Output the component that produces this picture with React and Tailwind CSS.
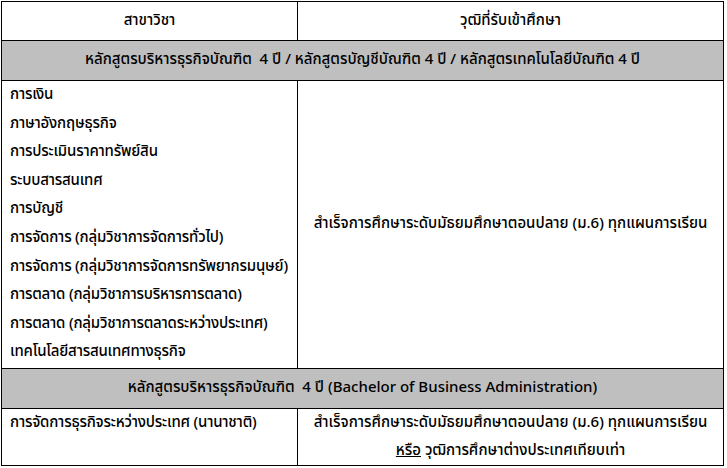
const majors = [
  'การเงิน',
  'ภาษาอังกฤษธุรกิจ',
  'การประเมินราคาทรัพย์สิน',
  'ระบบสารสนเทศ',
  'การบัญชี',
  'การจัดการ (กลุ่มวิชาการจัดการทั่วไป)',
  'การจัดการ (กลุ่มวิชาการจัดการทรัพยากรมนุษย์)',
  'การตลาด (กลุ่มวิชาการบริหารการตลาด)',
  'การตลาด (กลุ่มวิชาการตลาดระหว่างประเทศ)',
  'เทคโนโลยีสารสนเทศทางธุรกิจ',
];

export default function App() {
  return (
    <div className="w-[727px] h-[468px] bg-white p-px font-['Tahoma','Noto_Sans_Thai','Noto_Sans',sans-serif] text-[15px] font-medium text-black">
      <table className="w-[723px] border-collapse border border-black">
        <thead>
          <tr className="h-[39px]">
            <th className="w-[296px] border border-black font-medium">สาขาวิชา</th>
            <th className="border border-black font-medium">วุฒิที่รับเข้าศึกษา</th>
          </tr>
        </thead>
        <tbody>
          <tr className="h-[40px] bg-[#bfbfbf]">
            <td colSpan={2} className="border border-black text-center">
              หลักสูตรบริหารธุรกิจบัณฑิต&nbsp; 4 ปี / หลักสูตรบัญชีบัณฑิต 4 ปี / หลักสูตรเทคโนโลยีบัณฑิต 4 ปี
            </td>
          </tr>
          <tr className="h-[288px]">
            <td className="border border-black pl-2 align-top whitespace-nowrap tracking-[-0.2px]">
              {majors.map((m) => (
                <div key={m} className="leading-[28.6px]">{m}</div>
              ))}
            </td>
            <td className="border border-black text-center">
              สำเร็จการศึกษาระดับมัธยมศึกษาตอนปลาย (ม.6) ทุกแผนการเรียน
            </td>
          </tr>
          <tr className="h-[40px] bg-[#bfbfbf]">
            <td colSpan={2} className="border border-black text-center">
              หลักสูตรบริหารธุรกิจบัณฑิต&nbsp; 4 ปี (Bachelor of Business Administration)
            </td>
          </tr>
          <tr className="h-[56px]">
            <td className="border border-black pl-2 align-top leading-[28px] whitespace-nowrap tracking-[-0.2px]">
              การจัดการธุรกิจระหว่างประเทศ (นานาชาติ)
            </td>
            <td className="border border-black text-center align-top leading-[28px]">
              <div>สำเร็จการศึกษาระดับมัธยมศึกษาตอนปลาย (ม.6) ทุกแผนการเรียน</div>
              <div>
                <span className="underline">หรือ</span> วุฒิการศึกษาต่างประเทศเทียบเท่า
              </div>
            </td>
          </tr>
        </tbody>
      </table>
    </div>
  );
}
